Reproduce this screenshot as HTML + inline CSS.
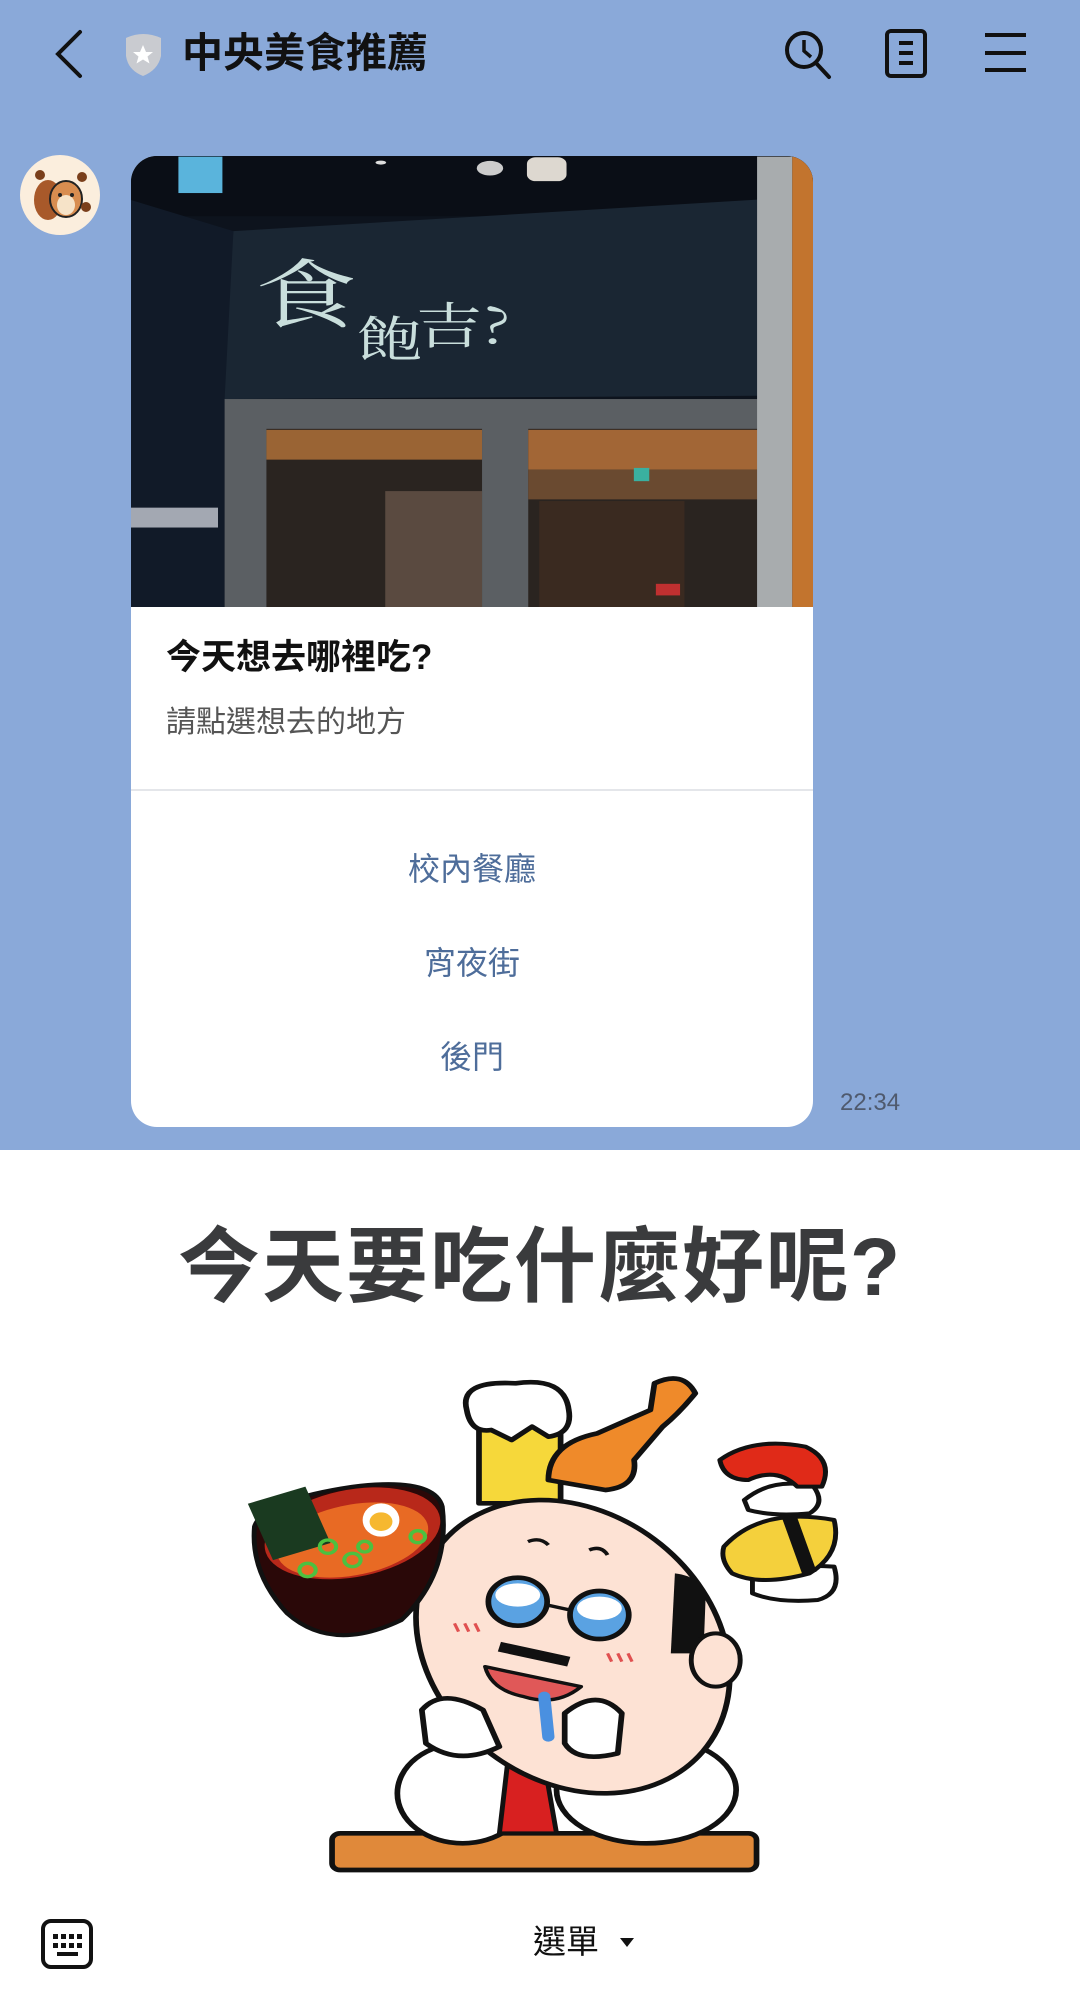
<!DOCTYPE html>
<html><head><meta charset="utf-8">
<style>
*{margin:0;padding:0;box-sizing:border-box}
body{width:1080px;height:1997px;overflow:hidden;background:#8aa9d9;font-family:"Liberation Sans","Noto Sans CJK TC",sans-serif;position:relative}
.abs{position:absolute}
.card{position:absolute;left:131px;top:156px;width:682px;height:971px;background:#fff;border-radius:26px;overflow:hidden}
.btn{position:absolute;left:0;width:100%;text-align:center;color:#4e6d9a;font-size:32px;line-height:40px}
</style></head><body>
<!-- header -->
<svg class="abs" style="left:0;top:0" width="1080" height="110">
<path d="M80 32 L58 54 L80 76" fill="none" stroke="#111" stroke-width="4" stroke-linecap="round"/>
<path d="M126 38 Q143 30 161 38 L161 56 Q158 70 143 76 Q128 70 126 56 Z" fill="#c9cbd0"/>
<path d="M143 45 l3 7 7 0 -5.5 4.5 2 7 -6.5 -4 -6.5 4 2 -7 -5.5 -4.5 7 0z" fill="#fff"/>
<circle cx="804" cy="50" r="17" fill="none" stroke="#111" stroke-width="4"/>
<path d="M816 63 L829 77" stroke="#111" stroke-width="4" stroke-linecap="round"/>
<path d="M804 40 V51 L811 57" fill="none" stroke="#111" stroke-width="3.5"/>
<rect x="887" y="31" width="38" height="45" rx="4" fill="none" stroke="#111" stroke-width="4"/>
<path d="M899 43 h14 M899 53 h14 M899 63 h14" stroke="#111" stroke-width="4"/>
<path d="M985 35 h41 M985 53 h41 M985 70 h41" stroke="#111" stroke-width="4"/>
<path d="M895 124 Q900 134 915 134 L1030 134 Q1040 134 1043 124 Z" fill="#9be08c"/>
</svg>
<div class="abs" style="left:182px;top:28px;font-size:41px;font-weight:bold;color:#111;line-height:50px">中央美食推薦</div>
<!-- avatar -->
<svg class="abs" style="left:20px;top:155px" width="80" height="80">
<circle cx="40" cy="40" r="40" fill="#fbeedd"/>
<ellipse cx="28" cy="45" rx="14" ry="20" fill="#a8592a"/>
<ellipse cx="46" cy="44" rx="16" ry="18" fill="#d88d50" stroke="#222" stroke-width="2"/>
<ellipse cx="46" cy="50" rx="9" ry="10" fill="#f6e3c8"/>
<circle cx="40" cy="40" r="2" fill="#222"/><circle cx="52" cy="40" r="2" fill="#222"/>
<circle cx="20" cy="20" r="5" fill="#7a3f1b"/><circle cx="62" cy="22" r="5" fill="#7a3f1b"/><circle cx="66" cy="52" r="5" fill="#7a3f1b"/>
</svg>
<!-- card -->
<div class="card">
<svg class="abs" style="left:-1px;top:-6px" width="690" height="457" viewBox="0 0 1568 1380" preserveAspectRatio="none">
<rect x="0" y="0" width="1568" height="1380" fill="#0d131d"/>
<rect x="0" y="0" width="1568" height="200" fill="#0a0e16"/>
<rect x="110" y="20" width="100" height="110" fill="#5ab4dc"/>
<ellipse cx="570" cy="38" rx="12" ry="6" fill="#ddd"/>
<ellipse cx="818" cy="55" rx="30" ry="22" fill="#ccc"/>
<rect x="902" y="22" width="90" height="72" rx="20" fill="#ddd8d0"/>
<polygon points="0,150 235,245 215,1380 0,1380" fill="#111a28"/>
<polygon points="235,245 1425,150 1425,742 215,752" fill="#1a2633"/>
<text x="285" y="520" font-family="Noto Serif CJK SC,serif" font-size="230" fill="#c9dedc" transform="scale(1,1)">食</text>
<text x="515" y="625" font-family="Noto Serif CJK SC,serif" font-size="150" fill="#c9dedc">飽</text>
<text x="650" y="585" font-family="Noto Serif CJK SC,serif" font-size="150" fill="#c9dedc">吉?</text>
<rect x="215" y="752" width="1215" height="628" fill="#5b5f63"/>
<rect x="310" y="842" width="490" height="538" fill="#2a2420"/>
<rect x="905" y="842" width="522" height="538" fill="#2a2420"/>
<rect x="310" y="845" width="490" height="90" fill="#9a6434"/>
<rect x="905" y="845" width="522" height="120" fill="#a26636"/>
<rect x="905" y="965" width="522" height="90" fill="#6a4a30"/>
<rect x="580" y="1030" width="220" height="350" fill="#5a4a40"/>
<rect x="930" y="1060" width="330" height="320" fill="#3a2a20"/>
<rect x="1145" y="960" width="35" height="40" fill="#3ab0a0"/>
<rect x="1425" y="20" width="80" height="1360" fill="#a8acae"/>
<rect x="1505" y="20" width="63" height="1360" fill="#c2742e"/>
<rect x="0" y="1080" width="200" height="60" fill="#c8ccd4" opacity=".8"/>
<rect x="1195" y="1310" width="55" height="35" fill="#c03030"/>
</svg>
<div class="abs" style="left:35px;top:480px;font-size:35px;font-weight:bold;color:#111;line-height:44px">今天想去哪裡吃?</div>
<div class="abs" style="left:35px;top:548px;font-size:30px;color:#555;line-height:38px">請點選想去的地方</div>
<div class="abs" style="left:0;top:633px;width:100%;height:2px;background:#e4e6ea"></div>
<div class="btn" style="top:693px">校內餐廳</div>
<div class="btn" style="top:787px">宵夜街</div>
<div class="btn" style="top:881px">後門</div>
</div>
<div class="abs" style="left:840px;top:1089px;font-size:24px;color:#4f5a6e">22:34</div>
<!-- bottom panel -->
<div class="abs" style="left:0;top:1150px;width:1080px;height:847px;background:#fff"></div>
<div class="abs" style="left:0;top:1218px;width:1080px;text-align:center;font-size:82px;font-weight:bold;color:#3a3b3d;line-height:100px;letter-spacing:2px">今天要吃什麼好呢?</div>
<svg class="abs" style="left:230px;top:1360px" width="640" height="530" viewBox="0 0 1568 1590" preserveAspectRatio="none" stroke-linejoin="round">
<!-- table -->
<rect x="250" y="1420" width="1040" height="110" rx="20" fill="#e0893a" stroke="#111" stroke-width="14"/>
<!-- arms -->
<ellipse cx="570" cy="1300" rx="160" ry="150" fill="#fff" stroke="#111" stroke-width="14"/>
<ellipse cx="1020" cy="1290" rx="220" ry="160" fill="#fff" stroke="#111" stroke-width="14"/>
<polygon points="680,1210 770,1210 800,1420 660,1420" fill="#d82020" stroke="#111" stroke-width="12"/>
<!-- beer -->
<rect x="610" y="180" width="200" height="250" fill="#f6d83a" stroke="#111" stroke-width="14"/>
<path d="M580 150 Q560 60 700 70 Q820 50 830 150 Q840 220 780 230 L740 200 L690 240 L640 210 Q590 220 580 150Z" fill="#fff" stroke="#111" stroke-width="14"/>
<!-- chicken -->
<path d="M780 360 Q780 250 900 220 L1030 150 L1040 70 Q1110 30 1140 100 Q1100 160 1060 200 L990 300 Q1000 380 920 390 Z" fill="#ef8a2a" stroke="#111" stroke-width="14"/>
<!-- head -->
<ellipse cx="840" cy="860" rx="360" ry="460" transform="rotate(-28 840 860)" fill="#fde2d4" stroke="#111" stroke-width="14"/>
<path d="M1090 640 Q1160 650 1165 720 L1160 880 L1080 880 Z" fill="#111"/>
<ellipse cx="1190" cy="900" rx="60" ry="80" fill="#fde2d4" stroke="#111" stroke-width="12"/>
<path d="M730 545 Q760 530 780 555 M880 570 Q910 555 925 585" fill="none" stroke="#111" stroke-width="10"/>
<circle cx="705" cy="725" r="72" fill="#5aa2e2" stroke="#111" stroke-width="14"/>
<circle cx="905" cy="765" r="72" fill="#5aa2e2" stroke="#111" stroke-width="14"/>
<ellipse cx="705" cy="705" rx="55" ry="35" fill="#fff"/>
<ellipse cx="905" cy="745" rx="55" ry="35" fill="#fff"/>
<path d="M777 735 L833 750" stroke="#111" stroke-width="10"/>
<path d="M660 860 L830 905" stroke="#111" stroke-width="30"/>
<path d="M625 920 Q740 950 860 980 Q800 1040 720 1010 Q640 990 625 920Z" fill="#e05858" stroke="#111" stroke-width="10"/>
<path d="M770 1010 L780 1130" stroke="#4a90e0" stroke-width="30" stroke-linecap="round"/>
<path d="M550 790 l10 25 M575 790 l10 25 M600 790 l10 25 M925 880 l10 25 M950 880 l10 25 M975 880 l10 25" stroke="#e05050" stroke-width="8"/>
<!-- hands -->
<path d="M470 1050 Q520 980 620 1050 L660 1160 Q560 1220 480 1150 Z" fill="#fff" stroke="#111" stroke-width="14"/>
<path d="M820 1060 Q900 980 960 1060 L950 1180 Q850 1210 820 1150 Z" fill="#fff" stroke="#111" stroke-width="14"/>
<!-- bowl -->
<path d="M60 500 Q80 420 300 380 Q500 350 520 440 Q540 640 420 780 Q250 880 140 760 Q50 640 60 500Z" fill="#2a0808" stroke="#111" stroke-width="12"/>
<ellipse cx="300" cy="520" rx="220" ry="130" transform="rotate(-15 300 520)" fill="#b8281a"/>
<ellipse cx="300" cy="540" rx="190" ry="105" transform="rotate(-15 300 540)" fill="#e86a24"/>
<rect x="70" y="400" width="150" height="180" transform="rotate(-20 145 490)" fill="#1a3a20"/>
<ellipse cx="370" cy="480" rx="45" ry="50" fill="#fff"/><circle cx="370" cy="485" r="28" fill="#f6b830"/>
<g fill="none" stroke="#4cc040" stroke-width="10"><circle cx="240" cy="560" r="20"/><circle cx="300" cy="600" r="20"/><circle cx="190" cy="630" r="20"/><circle cx="460" cy="530" r="18"/><circle cx="330" cy="560" r="16"/></g>
<!-- sushi -->
<path d="M1260 420 Q1330 350 1430 380 Q1460 430 1420 460 Q1330 470 1270 450Z" fill="#fff" stroke="#111" stroke-width="12"/>
<path d="M1200 300 Q1280 230 1410 260 Q1480 300 1450 380 L1390 380 Q1340 320 1270 360 Q1210 360 1200 300Z" fill="#e02a18" stroke="#111" stroke-width="12"/>
<path d="M1280 640 Q1380 610 1480 620 Q1500 700 1440 720 Q1340 730 1280 700Z" fill="#fff" stroke="#111" stroke-width="12"/>
<path d="M1210 560 Q1300 440 1480 480 Q1500 580 1420 640 Q1300 680 1230 640 Q1200 600 1210 560Z" fill="#f4d03c" stroke="#111" stroke-width="12"/>
<path d="M1370 470 L1420 640" stroke="#111" stroke-width="36"/>
</svg>
<!-- bottom bar -->
<svg class="abs" style="left:40px;top:1918px" width="54" height="52">
<rect x="3" y="3" width="48" height="46" rx="8" fill="none" stroke="#111" stroke-width="4"/>
<g fill="#111"><rect x="13" y="16" width="5" height="5"/><rect x="21" y="16" width="5" height="5"/><rect x="29" y="16" width="5" height="5"/><rect x="37" y="16" width="5" height="5"/><rect x="13" y="25" width="5" height="5"/><rect x="21" y="25" width="5" height="5"/><rect x="29" y="25" width="5" height="5"/><rect x="37" y="25" width="5" height="5"/><rect x="17" y="34" width="21" height="4"/></g>
</svg>
<div class="abs" style="left:533px;top:1921px;font-size:33px;color:#111;line-height:42px">選單</div>
<svg class="abs" style="left:619px;top:1936px" width="16" height="12"><path d="M1 2 h14 l-7 9z" fill="#111"/></svg>
</body></html>
